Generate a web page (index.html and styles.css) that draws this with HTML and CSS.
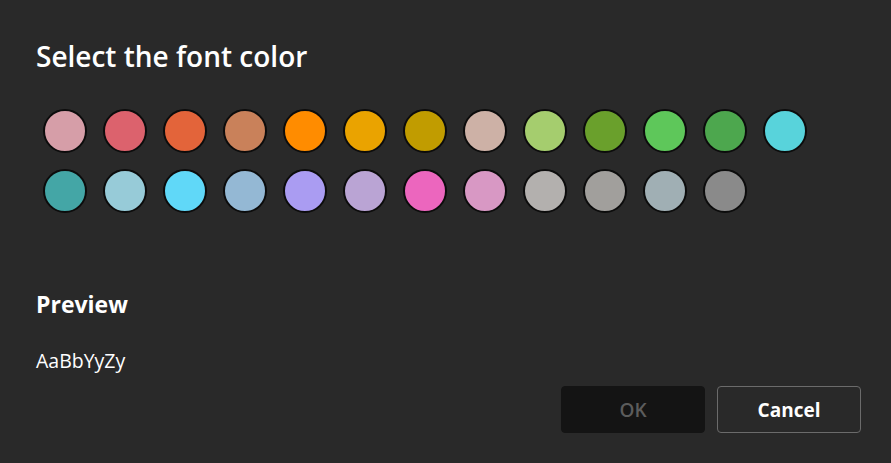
FILE: index.html
```
<!DOCTYPE html>
<html>
<head>
<meta charset="utf-8">
<link rel="stylesheet" href="styles.css">
</head>
<body>
<div class="dialog">
  <h1 class="title">Select the font color</h1>
  <div class="swatches">
    <span class="sw" style="background:#d69ea8"></span>
    <span class="sw" style="background:#dc626d"></span>
    <span class="sw" style="background:#e3643a"></span>
    <span class="sw" style="background:#c9815a"></span>
    <span class="sw" style="background:#ff8c00"></span>
    <span class="sw" style="background:#eaa300"></span>
    <span class="sw" style="background:#c19c00"></span>
    <span class="sw" style="background:#cdb1a6"></span>
    <span class="sw" style="background:#a5cd6e"></span>
    <span class="sw" style="background:#6aa02c"></span>
    <span class="sw" style="background:#5ec75a"></span>
    <span class="sw" style="background:#4da74e"></span>
    <span class="sw" style="background:#58d3db"></span>
    <span class="sw" style="background:#44a6a6"></span>
    <span class="sw" style="background:#97cbd8"></span>
    <span class="sw" style="background:#60d8f8"></span>
    <span class="sw" style="background:#94b8d4"></span>
    <span class="sw" style="background:#aa9cf2"></span>
    <span class="sw" style="background:#baa4d4"></span>
    <span class="sw" style="background:#ec66be"></span>
    <span class="sw" style="background:#d898c4"></span>
    <span class="sw" style="background:#b3b0ae"></span>
    <span class="sw" style="background:#a19f9c"></span>
    <span class="sw" style="background:#a0afb4"></span>
    <span class="sw" style="background:#8a8a8a"></span>
  </div>
  <h2 class="preview-label">Preview</h2>
  <p class="preview-text">AaBbYyZy</p>
  <div class="footer">
    <button class="btn btn-ok" disabled>OK</button>
    <button class="btn btn-cancel">Cancel</button>
  </div>
</div>
</body>
</html>
```
FILE: styles.css
```
html, body {
  margin: 0;
  padding: 0;
  background: #292929;
}
body {
  font-family: "Open Sans", "Noto Sans", sans-serif;
  color: #ffffff;
  width: 891px;
  height: 463px;
  overflow: hidden;
}
.dialog {
  display: flex;
  flex-direction: column;
  padding: 36px 30px 0 36px;
}
.title {
  margin: 0;
  font-size: 28px;
  font-weight: 600;
  line-height: 40px;
}
.swatches {
  display: grid;
  grid-template-columns: repeat(13, 44px);
  gap: 16px;
  margin: 33px 0 0 7px;
}
.sw {
  display: block;
  width: 44px;
  height: 44px;
  box-sizing: border-box;
  border-radius: 50%;
  border: 2px solid #0c0c0c;
}
.preview-label {
  margin: 75px 0 0 0;
  font-size: 23px;
  font-weight: 700;
  line-height: 32px;
}
.preview-text {
  margin: 27px 0 0 0;
  font-size: 19.5px;
  line-height: 28px;
}
.footer {
  display: flex;
  justify-content: flex-end;
  gap: 12px;
  margin-top: 11px;
}
.btn {
  width: 144px;
  height: 47px;
  border-radius: 4px;
  font-family: "Open Sans", "Noto Sans", sans-serif;
  font-size: 19px;
  font-weight: 700;
  box-sizing: border-box;
}
.btn-ok {
  background: #141414;
  color: #5c5c5c;
  border: 1px solid #141414;
  font-weight: 600;
}
.btn-cancel {
  background: #292929;
  color: #ffffff;
  border: 1px solid #6b6b6b;
}
```
